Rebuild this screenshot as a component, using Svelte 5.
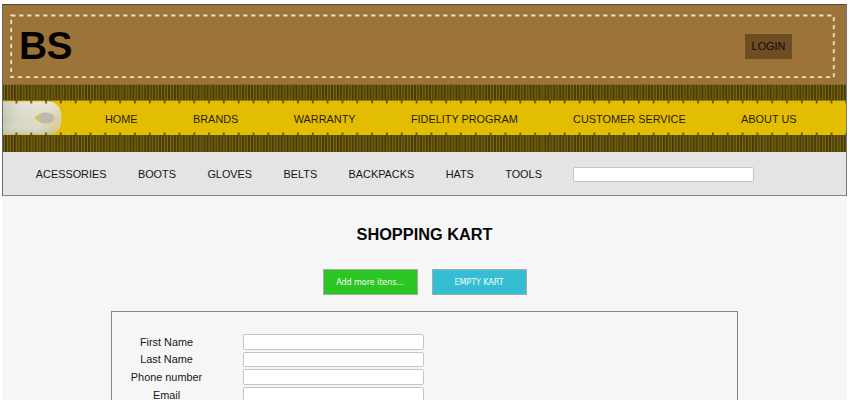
<script>
  const sections = ['HOME', 'BRANDS', 'WARRANTY', 'FIDELITY PROGRAM', 'CUSTOMER SERVICE', 'ABOUT US'];
  const categories = ['ACESSORIES', 'BOOTS', 'GLOVES', 'BELTS', 'BACKPACKS', 'HATS', 'TOOLS'];
  const fields = ['First Name', 'Last Name', 'Phone number', 'Email'];
</script>

<div class="page">
  <header>
    <div class="leather">
      <svg class="stitch" width="826" height="66">
        <path d="M1.2 1.5H823.8V63.2H1.2Z" fill="none" stroke="#f1dfbd" stroke-width="1.8" stroke-dasharray="4.3 3.7" />
      </svg>
      <h1>BS</h1>
      <button class="login">LOGIN</button>
    </div>
    <nav class="tape">
      <svg class="ruler" width="843" height="68">
        <defs>
          <pattern id="fringe" width="14.82" height="17" patternUnits="userSpaceOnUse">
            <rect width="15" height="17" fill="#564607" />
            <path d="M1.5 0V17M4.5 0V17M7.4 0V17M10.4 0V17M13.4 0V17" stroke="#837019" stroke-width=".8" />
            <path d="M2.8 0V17M8.8 0V17M11.8 0V17" stroke="#3f3003" stroke-width=".9" />
          </pattern>
          <pattern id="ticks" x="12.5" width="14.82" height="68" patternUnits="userSpaceOnUse">
            <path d="M0 16h1.7v3.5h-1.7zM0 48.5h1.7v4h-1.7z" fill="#684d08" />
          </pattern>
          <linearGradient id="metal" x2="1" y2=".25">
            <stop offset="0" stop-color="#b9baa2" />
            <stop offset=".35" stop-color="#d5d6c5" />
            <stop offset=".75" stop-color="#dddbc8" />
            <stop offset="1" stop-color="#d8cf9f" />
          </linearGradient>
          <linearGradient id="shade" x2="0" y2="1">
            <stop offset="0" stop-color="#fff" stop-opacity=".35" />
            <stop offset=".6" stop-color="#fff" stop-opacity="0" />
            <stop offset="1" stop-color="#98977b" stop-opacity=".3" />
          </linearGradient>
        </defs>
        <rect width="843" height="68" fill="url(#fringe)" />
        <rect width="843" height=".7" fill="#9c7338" />
        <rect y="16.6" width="843" height="34.4" fill="#e3bd02" />
        <path d="M0 17.5H44Q58.5 17.5 58.5 34T44 50.5H0Z" fill="url(#metal)" />
        <path d="M0 17.5H44Q58.5 17.5 58.5 34T44 50.5H0Z" fill="url(#shade)" />
        <path d="M31.5 34Q36 28.5 43 28.5V39.5Q36 39.5 31.5 34Z" fill="#e1c33b" />
        <ellipse cx="43.2" cy="34" rx="8" ry="5.5" fill="#bdbbb0" />
        <rect width="843" height="68" fill="url(#ticks)" />
      </svg>
      {#each sections as section}<a>{section}</a>{/each}
    </nav>
    <nav class="categories">
      {#each categories as category}<a>{category}</a>{/each}
      <input aria-label="Search" />
    </nav>
  </header>

  <main>
    <h2>SHOPPING KART</h2>
    <div class="actions">
      <button class="add">Add more itens...</button>
      <button class="empty">EMPTY KART</button>
    </div>
    <form>
      {#each fields as field}
        <label><span>{field}</span><input /></label>
      {/each}
    </form>
  </main>
</div>

<style>
  :global(body) { background: #fff; overflow: hidden; }
  .page {
    box-sizing: border-box;
    width: 845px;
    height: 400px;
    margin-left: 2px;
    padding-top: 4px;
    overflow: hidden;
    background: linear-gradient(#fff 4px, #f6f6f6 4px);
    font: 10.88px/14px "Liberation Sans", Arial, sans-serif;
    color: #161616;
  }
  header {
    box-sizing: border-box;
    height: 192px;
    border: 1px solid #555;
    border-color: #56462f #777 #888 #666;
  }
  .leather {
    position: relative;
    box-sizing: border-box;
    height: 80px;
    display: flex;
    align-items: center;
    justify-content: space-between;
    padding: 2px 54px 0 16px;
    background: #9c7338;
  }
  .stitch { position: absolute; left: 7px; top: 8.5px; }
  h1 { margin: 0; font-size: 39px; line-height: 44px; color: #050403; letter-spacing: -0.6px; }
  button { font: inherit; padding: 0; }
  .login { width: 47px; height: 25px; border: 0; background: #6d4e24; color: #120c05; }
  .tape {
    position: relative;
    height: 67px;
    display: flex;
    align-items: center;
    gap: 55.4px;
    padding-left: 102px;
    white-space: nowrap;
    color: #2c1d06;
  }
  .ruler { position: absolute; left: 0; top: -1px; height: 68px; }
  .tape a { position: relative; }
  .categories {
    height: 43px;
    display: flex;
    align-items: center;
    gap: 31.4px;
    padding-left: 32.8px;
    background: #e4e4e4;
  }
  input {
    box-sizing: border-box;
    width: 181px;
    height: 15.5px;
    padding: 0;
    border: 1px solid #c5c5c5;
    border-radius: 2px;
    background: #fff;
  }
  .categories input { margin-top: 2px; }
  h2 { margin: 28px 0 0; font-size: 16.32px; line-height: 20px; text-align: center; color: #080808; }
  .actions { display: flex; justify-content: center; gap: 14px; margin-top: 25px; }
  .actions button {
    box-sizing: border-box;
    width: 95px;
    height: 26px;
    border: 1px solid #a4aaa4;
    font: 9px/12px "DejaVu Sans Condensed", "DejaVu Sans", sans-serif;
    font-stretch: condensed;
    letter-spacing: -0.1px;
    color: #f2fff2;
  }
  .add { background: #2bc524; }
  .empty { background: #35bdd3; }
  form {
    box-sizing: border-box;
    width: 627px;
    height: 130px;
    margin: 16px 0 0 109px;
    padding-top: 21px;
    border: 1px solid #858585;
  }
  label { display: flex; align-items: center; height: 17.6px; }
  label span { width: 109px; text-align: center; }
  label input { margin-left: 22px; }
</style>
